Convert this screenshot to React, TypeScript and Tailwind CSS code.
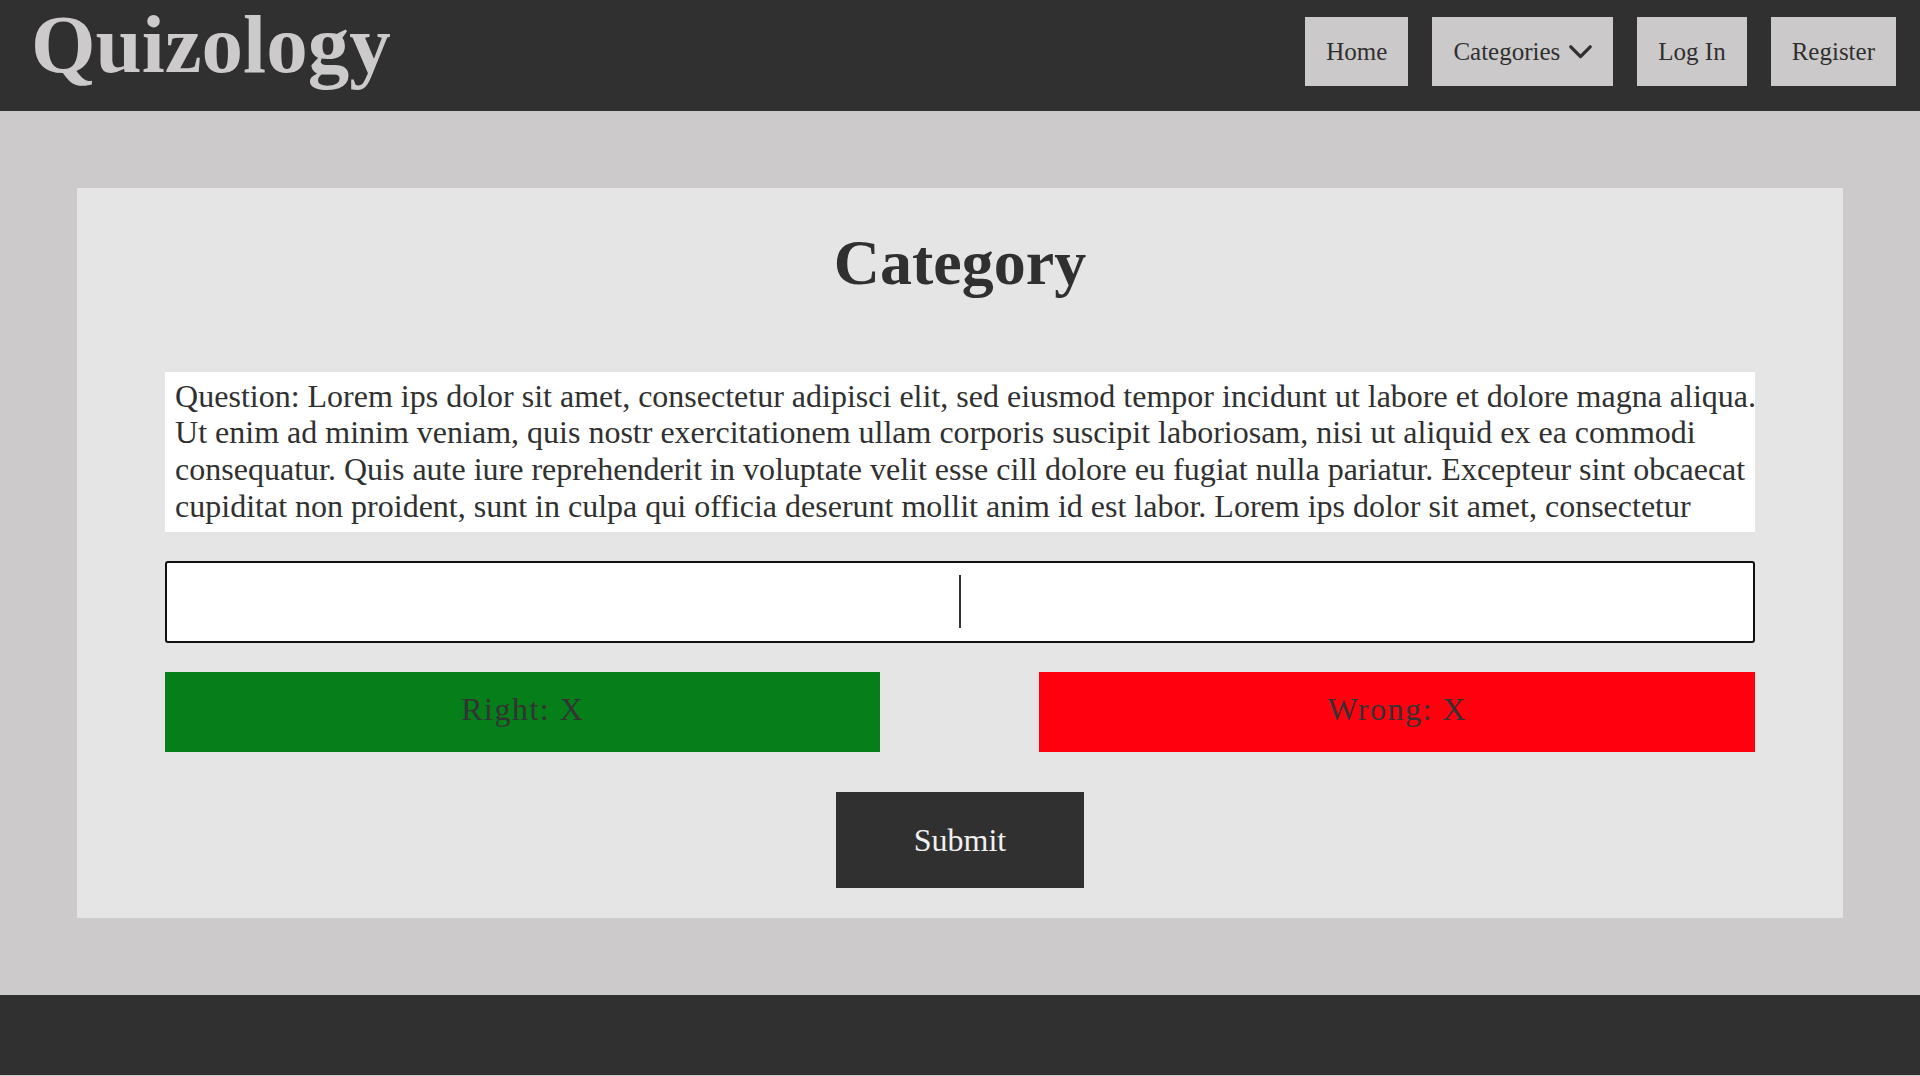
type NavItem = { label: string; dropdown?: boolean };

const navItems: NavItem[] = [
  { label: "Home" },
  { label: "Categories", dropdown: true },
  { label: "Log In" },
  { label: "Register" },
];

const questionLines = [
  "Question: Lorem ips dolor sit amet, consectetur adipisci elit, sed eiusmod tempor incidunt ut labore et dolore magna aliqua.",
  "Ut enim ad minim veniam, quis nostr exercitationem ullam corporis suscipit laboriosam, nisi ut aliquid ex ea commodi",
  "consequatur. Quis aute iure reprehenderit in voluptate velit esse cill dolore eu fugiat nulla pariatur. Excepteur sint obcaecat",
  "cupiditat non proident, sunt in culpa qui officia deserunt mollit anim id est labor. Lorem ips dolor sit amet, consectetur",
];

function Chevron() {
  return (
    <svg width="23" height="14" viewBox="0 0 23 14" className="ml-[9px]">
      <polyline
        points="1.8,1.8 11.5,11.6 21.2,1.8"
        fill="none"
        stroke="#303030"
        strokeWidth="3.2"
        strokeLinecap="round"
        strokeLinejoin="round"
      />
    </svg>
  );
}

export default function App() {
  return (
    <div className="min-h-screen flex flex-col bg-[#cccacb] font-['Liberation_Serif','Times_New_Roman',serif] text-[#303030]">
      <header className="h-[111px] bg-[#303030] flex justify-between items-start">
        <h1 className="pl-[31px] pt-[3px] text-[83px] leading-[82px] font-bold text-[#cccacb]">
          Quizology
        </h1>
        <nav className="flex gap-[24px] pr-[24px] pt-[17px]">
          {navItems.map((item) => (
            <a
              key={item.label}
              href="#"
              className="h-[69px] px-[21px] flex items-center bg-[#cbc9ca] text-[25px] text-[#303030]"
            >
              {item.label}
              {item.dropdown && <Chevron />}
            </a>
          ))}
        </nav>
      </header>

      <main className="py-[77px]">
        <section className="w-[92%] mx-auto bg-[#e5e5e5] pt-[38px] pb-[30px] flex flex-col items-center">
          <h2 className="text-[64px] font-bold leading-[1.15]">Category</h2>

          <div className="w-[90%] h-[160px] mt-[72px] bg-white pl-[10px] py-[6px] text-[32px] leading-[1.15] text-[#303030] whitespace-nowrap">
            {questionLines.map((line) => (
              <div key={line}>{line}</div>
            ))}
          </div>

          <div className="relative w-[90%] h-[82px] mt-[29px]">
            <input
              type="text"
              aria-label="Answer"
              className="w-full h-full bg-white border-2 border-[#111111] rounded-[3px] text-center text-[32px] outline-none"
            />
            <span className="absolute left-1/2 top-[14px] w-[2px] h-[53px] -translate-x-1/2 bg-[#333333]" />
          </div>

          <div className="w-[90%] mt-[29px] flex justify-between">
            <div className="w-[45%] h-[80px] pb-[6px] bg-[#067e1a] flex items-center justify-center text-[32px] tracking-[1.5px] text-[#333333]">
              Right: X
            </div>
            <div className="w-[45%] h-[80px] pb-[6px] bg-[#ff000f] flex items-center justify-center text-[32px] tracking-[1.5px] text-[#333333]">
              Wrong: X
            </div>
          </div>

          <button className="mt-[40px] w-[248px] h-[96px] bg-[#303030] text-[32px] text-[#f0f0f0]">
            Submit
          </button>
        </section>
      </main>

      <footer className="h-[80px] bg-[#303030]" />
    </div>
  );
}
